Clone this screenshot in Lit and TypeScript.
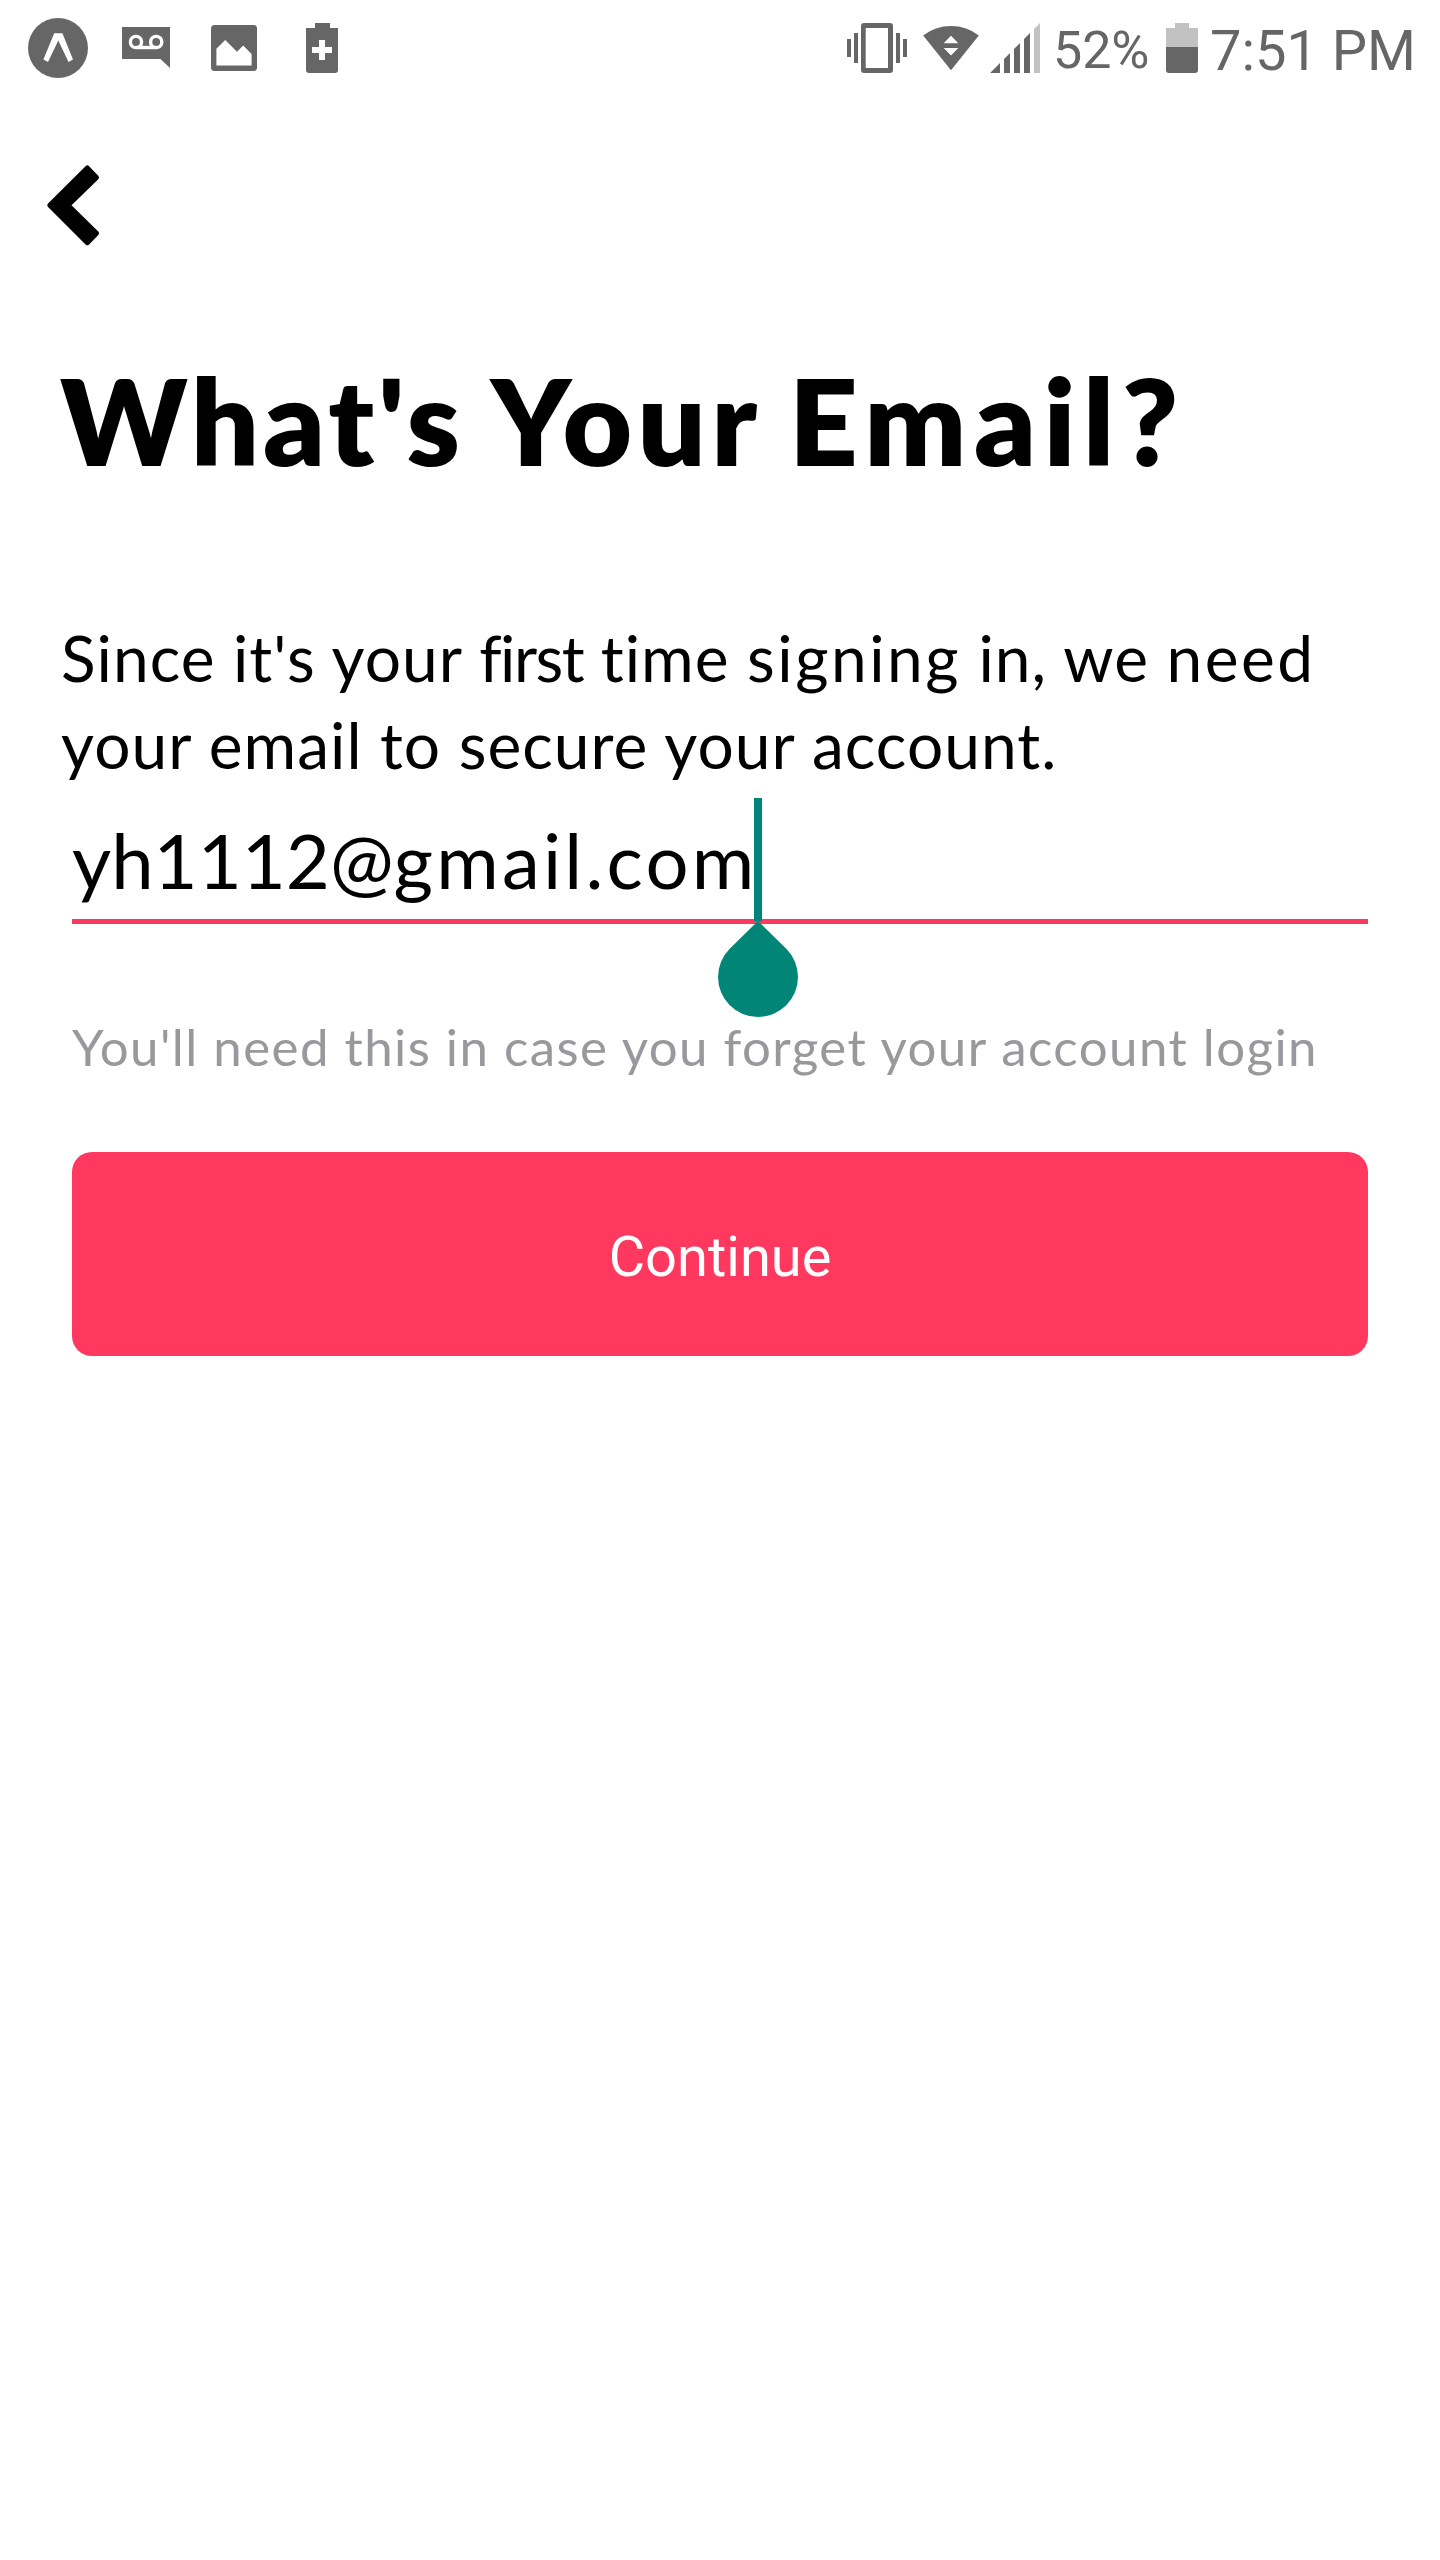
import { LitElement, html, css } from "lit";
import { customElement, property } from "lit/decorators.js";

@customElement("status-bar")
export class StatusBar extends LitElement {
  @property() battery = "52%";
  @property() time = "7:51 PM";

  static styles = css`
    :host {
      display: flex;
      justify-content: space-between;
      height: 100px;
      padding: 0 24px 0 28px;
      color: #666;
      font-family: Roboto, "Liberation Sans", sans-serif;
      white-space: nowrap;
    }
    .group {
      display: flex;
    }
    svg {
      display: block;
      height: 100px;
      flex: none;
      fill: currentColor;
    }
    .app { width: 60px; margin-right: 34px; }
    .voicemail { width: 48px; margin-right: 41px; }
    .picture { width: 46px; margin-right: 49px; }
    .saver { width: 32px; }
    .vibrate { width: 60px; margin-right: 16px; }
    .wifi { width: 56px; margin-right: 11px; }
    .signal { width: 50px; margin-right: 13px; }
    .cell { width: 32px; margin-right: 12px; }
    .hole { fill: #fff; }
    .line { fill: none; stroke: #fff; stroke-width: 3.4; }
    .faint { fill: #c2c2c2; }
    .percent { width: 98px; margin-right: 15px; font-size: 52px; line-height: 101px; }
    .time { font-size: 56px; line-height: 102px; }
  `;

  render() {
    return html`
      <div class="group">
        <svg class="app" viewBox="28 0 60 100">
          <circle cx="58" cy="48" r="30" />
          <path class="hole" d="M54.2 33.3h8.2L73 59.6l-4.5 2.3L58.3 40.5 48 61.9l-4.6-2.3z" />
        </svg>
        <svg class="voicemail" viewBox="122 0 48 100">
          <path d="M122 27h48v41l-9.500-9H122z" />
          <path class="line" d="M136 47.500h20.300" />
          <circle class="line" cx="136" cy="42" r="5.600" />
          <circle class="line" cx="156.200" cy="42" r="5.600" />
        </svg>
        <svg class="picture" viewBox="211 0 46 100">
          <rect x="211" y="25" width="46" height="46" rx="3.500" />
          <path class="hole" d="M216.400 48.800l8.800-8.800L237 51.800l6.200-6.300 8.400 8.500v11.500h-35.200z" />
        </svg>
        <svg class="saver" viewBox="306 0 32 100">
          <path d="M315 23h15v5h8v42q0 3-3 3h-26q-3 0-3-3V28h9z" />
          <path class="hole" d="M319 40h6v7h7v6h-7v7h-6v-7h-7v-6h7z" />
        </svg>
      </div>
      <div class="group">
        <svg class="vibrate" viewBox="847 0 60 100">
          <path d="M847 39h4v18h-4zM854 33h4v30h-4zM896 33h4v30h-4zM903 39h4v18h-4z" />
          <path fill-rule="evenodd" d="M864 23h26q3 0 3 3v44q0 3-3 3h-26q-3 0-3-3V26q0-3 3-3zM865.700 28v40H888V28z" />
        </svg>
        <svg class="wifi" viewBox="923 0 56 100">
          <path d="M951 70.300L923.200 35.500Q935 26 951 26t27.800 9.500z" />
          <path class="hole" d="M951 35.800l7.300 7.400h-14.600zM943.700 48h14.600L951 55.400z" />
        </svg>
        <svg class="signal" viewBox="990 0 50 100">
          <path d="M990 73l10-10v10zM1004 59l6-6v20h-6zM1014 49l6-6v30h-6zM1024 39l6-6v40h-6z" />
          <path class="faint" d="M1034 29l6-6v50h-6z" />
        </svg>
        <div class="percent">${this.battery}</div>
        <svg class="cell" viewBox="1166 0 32 100">
          <path class="faint" d="M1175 23h14v5h9v19h-32V28h9z" />
          <path d="M1166 47h32v23q0 3-3 3h-26q-3 0-3-3z" />
        </svg>
        <div class="time">${this.time}</div>
      </div>
    `;
  }
}

@customElement("app-root")
export class AppRoot extends LitElement {
  @property() user = "yh1112@";
  @property() domain = "gmail.com";

  static styles = css`
    :host {
      display: flex;
      flex-direction: column;
      box-sizing: border-box;
      width: 1440px;
      height: 2560px;
      background: #fff;
      color: #000;
      font-family: Lato, "Open Sans", sans-serif;
    }
    .back {
      display: block;
      width: 56px;
      height: 84px;
      margin: 63px 0 101px 45px;
      padding: 0;
      border: 0;
      background: none;
    }
    .back svg {
      display: block;
      stroke: #000;
      stroke-width: 5;
      stroke-linejoin: round;
    }
    h1 {
      margin: 0 0 0 60px;
      font-size: 120px;
      font-weight: 800;
      line-height: 144px;
      white-space: nowrap;
      word-spacing: -1px;
    }
    .what { letter-spacing: 4px; }
    .your { letter-spacing: 5.3px; }
    .mail { letter-spacing: 7.5px; }
    .intro {
      margin: 122px 0 0 61px;
      font-size: 64px;
      line-height: 87px;
      letter-spacing: 1.05px;
      white-space: nowrap;
    }
    .tight { letter-spacing: -1.5px; }
    .loose { letter-spacing: 2.5px; }
    .form {
      display: flex;
      flex-direction: column;
      margin: 0 72px;
    }
    .field {
      display: flex;
      height: 92px;
      padding: 26px 0 13px;
      border-bottom: 5px solid #ff385f;
      font-size: 76px;
      line-height: 92px;
    }
    .value {
      position: relative;
      white-space: nowrap;
    }
    .user { letter-spacing: 0; }
    .domain { letter-spacing: 3.2px; }
    .caret {
      position: absolute;
      left: 682px;
      top: -16px;
      width: 8px;
      height: 123px;
      background: #008577;
    }
    .handle {
      position: absolute;
      left: 646px;
      top: 107px;
      width: 80px;
      height: 96px;
      fill: #008577;
    }
    .hint {
      margin-top: 92px;
      color: #98989d;
      font-size: 51px;
      line-height: 62px;
      letter-spacing: 1.45px;
      white-space: nowrap;
    }
    .continue {
      box-sizing: border-box;
      height: 204px;
      margin-top: 74px;
      padding: 5px 0 0;
      border: 0;
      border-radius: 20px;
      background: #ff385f;
      color: #fff;
      font: 400 56px Roboto, "Liberation Sans", sans-serif;
    }
  `;

  render() {
    return html`
      <status-bar></status-bar>
      <button class="back" aria-label="Back">
        <svg width="56" height="84" viewBox="45 163 56 84">
          <path d="M49.800 205.300L87.300 168l9.200 9.400-28.500 27.900 28.500 28-9.200 9.400z" />
        </svg>
      </button>
      <h1><span class="what">What's</span> <span class="your">Your</span> <span class="mail">Email?</span></h1>
      <div class="intro">Since it's your <span class="tight">first</span> time <span class="loose">signing</span> in, we <span class="loose">need</span><br />your email to secure your account.</div>
      <div class="form">
        <div class="field">
          <div class="value">
            <span class="user">${this.user}</span><span class="domain">${this.domain}</span>
            <div class="caret"></div>
            <svg class="handle" viewBox="0 0 80 96">
              <path d="M40 0L68.300 27.700A40 40 0 1 1 11.700 27.700z" />
            </svg>
          </div>
        </div>
        <div class="hint">You'll need this in case you forget your account login</div>
        <button class="continue">Continue</button>
      </div>
    `;
  }
}
